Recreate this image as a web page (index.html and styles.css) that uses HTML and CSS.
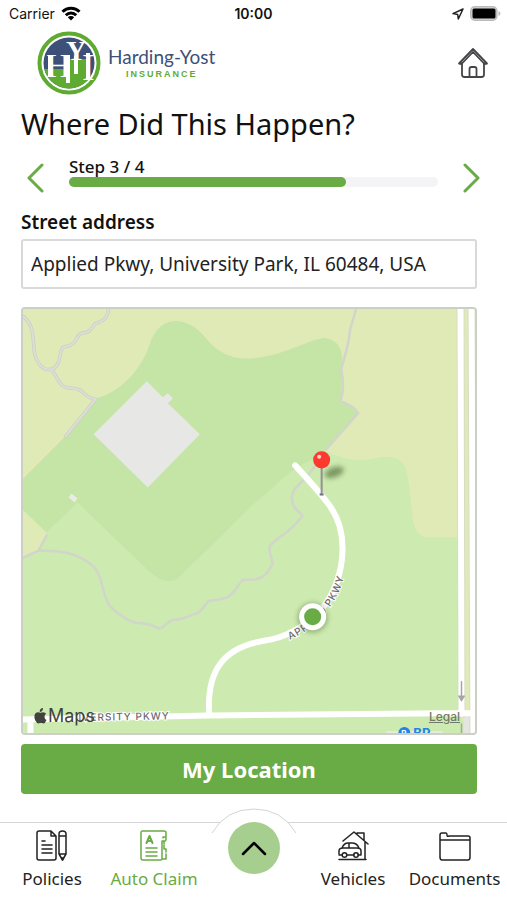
FILE: index.html
```html
<!DOCTYPE html>
<html lang="en">
<head>
<meta charset="utf-8">
<meta name="viewport" content="width=device-width, initial-scale=1">
<title>Harding-Yost Insurance</title>
<link rel="stylesheet" href="styles.css">
</head>
<body>
<div class="status">
  <div class="status-left">
    <span>Carrier</span>
    <svg width="20" height="15" viewBox="0 0 20 15" fill="none" stroke="#000" stroke-width="3"><path d="M1.5 5.8a12 12 0 0 1 17 0M4.8 9.2a7.4 7.4 0 0 1 10.4 0"/><path d="M10 14.5l-3.2-3.3a4.6 4.6 0 0 1 6.4 0z" fill="#000" stroke="none"/></svg>
  </div>
  <time class="clock">10:00</time>
  <div class="status-right">
    <svg width="12" height="12" viewBox="0 0 12 12" fill="none" stroke="#222" stroke-width="1.5" stroke-linejoin="round"><path d="M11 1L1 5.600l4.700.9.6 4.500z"/></svg>
    <svg width="31" height="15" viewBox="0 0 31 15"><rect x=".8" y=".8" width="26" height="13.400" rx="4" fill="#ddd" stroke="#bbb" stroke-width="1.600"/><rect x="2.500" y="2.500" width="23" height="10" rx="1.500"/><path d="M28.500 5q2 .8 2 2.500t-2 2.500z" fill="#bbb"/></svg>
  </div>
</div>

<header class="header">
  <div class="brand">
    <svg class="brand-mark" width="64" height="64" viewBox="0 0 64 64">
      <circle cx="32" cy="32" r="29.500" fill="#fff" stroke="#5fab32" stroke-width="4"/>
      <clipPath id="disc"><circle cx="32" cy="32" r="25.500"/></clipPath>
      <g clip-path="url(#disc)">
        <path fill="#3d5078" d="M0 0h64v64H0z"/>
        <path fill="#5fab32" d="M0 38h30V28h19v-6l4 2v36h-4v4H0z"/>
      </g>
      <path d="M13 24v22M31 24v28M39 25v18M51 22v26" stroke="#fff" stroke-width="4"/>
      <text class="monogram"><tspan class="mono-h" x="9" y="46">H</tspan><tspan class="mono-y" x="29" y="29">Y</tspan><tspan class="mono-i" x="45" y="49">I</tspan></text>
    </svg>
    <div class="brand-text"><span class="brand-name">Harding-Yost</span><span class="brand-sub">INSURANCE</span></div>
  </div>
  <a class="home" href="#" aria-label="Home">
    <svg width="32" height="32" viewBox="0 0 32 32" fill="none" stroke="#444548" stroke-width="1.800" stroke-linejoin="round" stroke-linecap="round"><path d="M2 16.500L16 2l14 14.500-2.500.5L16 5 4.500 17z"/><path d="M5 16v11.500q0 2.500 2.500 2.500h17q2.500 0 2.500-2.500V16M12.500 30v-8q0-2 2-2h3q2 0 2 2v8"/></svg>
  </a>
</header>

<main class="content">
  <h1>Where Did This Happen?</h1>
  <div class="steps">
    <button class="arrow" type="button" aria-label="Previous step"><svg width="18" height="30" viewBox="0 0 18 30"><path d="M16 2L3 15l13 13"/></svg></button>
    <div class="step">
      <span class="step-label">Step 3 / 4</span>
      <div class="track"><div class="fill"></div></div>
    </div>
    <button class="arrow" type="button" aria-label="Next step"><svg width="18" height="30" viewBox="0 0 18 30"><path d="M2 2l13 13L2 28"/></svg></button>
  </div>
  <label class="label" for="address">Street address</label>
  <input class="address" id="address" type="text" value="Applied Pkwy, University Park, IL 60484, USA">

  <div class="map">
    <svg class="map-art" viewBox="21 308 456 427" preserveAspectRatio="xMidYMid slice">
      <defs>
        <filter id="soft" x="-50%" y="-50%" width="200%" height="200%"><feGaussianBlur stdDeviation="2.500"/></filter>
        <path id="curve" d="M209 714V706C209 672 222 648 264 641C286 638 303 628 318 613C343 588 353 535 327 503Q318 491 295 466"/>
        <path id="label-line" d="M280 643C296 639 309 630 320 619C335 603 343 588 346 565"/>
      </defs>
      <path fill="#cdeab0" d="M0 290h500v460H0z"/>
      <path fill="#e0eab7" d="M0 290h500v248h-75Q414 534 412 518Q410 492 406 470Q400 455 380 458Q352 466 324 451L200 500H47V535L38 551L0 566z"/>
      <path fill="#c4e5a5" d="M0 503L66 437L97 399C119 394 142 371 150 345C160 314 188 317 205 338C224 362 245 363 276 355C302 347 312 340 325 339Q344 342 342 367L341 401Q357 408 357 414L330 446L318 458Q304 463 290 473L250 508L185 572Q170 591 150 572L78 503L47 533L0 488z"/>
      <path fill="#cdeab0" d="M78 503L47 533V551H110V534z"/>
      <path fill="#c4e5a5" d="M78 503L110 534L150 572V500z"/>
      <path fill="#e7e7e5" d="M147 382L165 400L163 398L168 394L173 399L168 404L200 435L148 488L94 435z"/>
      <path fill="#e9ebe5" d="M72 494l6 5-3 4-6-5z"/>
      <g fill="none" stroke-linejoin="round" stroke-linecap="round">
        <path stroke="#cbcec6" stroke-width="3.500" d="M20 315C36 323 33 341 35 354Q40 373 53 370C63 365 59 350 64 348C79 346 75 337 82 334C91 334 92 329 95 325C103 322 109 320 109 307M51 370C59 377 58 389 72 389C86 389 83 399 96 400L66 437"/>
        <path stroke="#dedeD6" stroke-width="2" d="M20 315C36 323 33 341 35 354Q40 373 53 370C63 365 59 350 64 348C79 346 75 337 82 334C91 334 92 329 95 325C103 322 109 320 109 307M51 370C59 377 58 389 72 389C86 389 83 399 96 400L66 437"/>
        <path stroke="#d2d5ca" stroke-width="2.500" d="M357 306L350 330Q349 340 346 352L341 370Q345 389 340 402C347 405 354 407 358 414L326 450M316 465Q310 474 300 484C289 493 290 504 297 511Q305 516 300 519C287 536 282 533 270 546C267 556 276 562 271 567C263 583 251 580 243 580C237 586 237 590 229 597C223 600 217 600 209 601C202 609 200 614 195 614C184 619 180 620 173 620C166 622 164 631 157 628C150 623 142 624 136 623C128 621 116 613 110 606C101 592 104 579 95 568C81 555 67 551 39 551L20 560M39 551L47 536"/>
        <path stroke="#e0eab7" stroke-width="16" d="M465 300L467 714"/>
        <path stroke="#e4e4e1" stroke-width="6" d="M466 719V750"/>
        <path stroke="#d7dcc4" stroke-width="8" d="M460 300L461 714M471 300L473 750"/>
        <path stroke="#fff" stroke-width="6" d="M460 300L461 714M471 300L473 750M0 720L209 715.500L472 713M31 721V750"/>
        <use href="#curve" stroke="#fff" stroke-width="6"/>
        <path stroke="#a5a5a8" stroke-width="1.500" d="M461 682V698M461 724V740"/>
        <path fill="#a5a5a8" stroke="#a5a5a8" stroke-width="1" d="M458 696h6l-3 5z"/>
      </g>
      <g class="road-label">
        <text x="79" y="721" transform="rotate(-1 79 721)">IVERSITY PKWY</text>
        <text><textPath href="#label-line" startOffset="10">APPLIED PKWY</textPath></text>
      </g>
      <path d="M386 734h56" stroke="#e6e8e2" stroke-width="6"/>
      <circle cx="404" cy="733" r="6" fill="#2184e8"/>
      <text class="poi-mark" x="401" y="736">P</text>
      <text class="poi" x="413" y="738">BP</text>
      <ellipse cx="334" cy="473" rx="10" ry="5" fill="#496231" opacity=".6" transform="rotate(-20 334 473)" filter="url(#soft)"/>
      <path d="M321.500 465v30" stroke="#929296" stroke-width="2"/><path d="M319.500 495h4" stroke="#6c7480" stroke-width="2"/>
      <circle cx="321.500" cy="460.500" r="8.500" fill="#fc3a30"/><circle cx="319" cy="457.500" r="2" fill="#ffd3ce"/>
      <circle cx="312.500" cy="618" r="15" fill="#557040" opacity=".45" filter="url(#soft)"/>
      <circle cx="312.500" cy="617" r="13.500" fill="#fff"/><circle cx="312.500" cy="617" r="8.500" fill="#69ab44"/>
    </svg>
    <span class="map-credit"><svg width="13" height="16" viewBox="0 0 13 16"><path d="M9 0q.1 2-1 3-1 1-2.300.9-.1-1.700.9-2.800Q7.600.2 9 0zM12.500 12q-1.500 3.500-3 3.500-.8 0-1.500-.4-1-.4-2.200 0-.7.4-1.400.4Q2.800 15.300 1.300 12.500 0 9.500.5 7.200 1.300 4.200 4 4.200q.8 0 1.500.4 1 .4 2 0 .8-.4 1.700-.4 1.900 0 3 1.600-1.800 1.100-1.700 3.100.1 2.200 2 3.100z"/></svg>Maps</span>
    <a class="map-legal" href="#">Legal</a>
  </div>
  <button class="primary" type="button">My Location</button>
</main>

<nav class="tabs">
  <a class="tab" href="#">
    <svg width="32" height="32" viewBox="0 0 32 32"><path d="M15 1H3Q1 1 1 3v25q0 2 2 2h15q2 0 2-2V6l-5-5v5h5M6 11h3M6 15h10M6 19h10M6 23h10M26.500 1q-3.500 0-3.500 3v20l3.500 6 3.500-6V4q0-3-3.500-3zM23 6h7M23 24h7"/><path d="M25.500 28h2l-1 2z"/></svg>
    <span>Policies</span>
  </a>
  <a class="tab active" href="#">
    <svg width="32" height="32" viewBox="0 0 32 32"><path d="M25 8V7h3V3q0-2-2-2H4Q3 1 3 3v25q0 2 2 2h18q1 0 1-2V11h2M28 7v3l-2 2v2M26 15v4h2v3M28 24v5h-3M8 18h11M8 22h11M8 26h11"/><path stroke-width="2" d="M8.500 13L11.500 6l3 7M9.500 11h4"/></svg>
    <span>Auto Claim</span>
  </a>
  <div class="tab-center">
    <svg class="arc" width="86" height="26" viewBox="0 0 86 26"><path d="M1 25Q15 1 43 1T85 25"/></svg>
    <button class="expand" type="button" aria-label="More"><svg width="26" height="16" viewBox="0 0 26 16"><path d="M2 14L13 3l11 11"/></svg></button>
  </div>
  <a class="tab" href="#">
    <svg width="32" height="32" viewBox="0 0 32 32"><path d="M6 11L17 2l14 12M20 4V3h7v7M28 12v17M2 29.500h27M2 24v-3q0-3 4-3h14q4 0 4 3v4h-3M5 18q2-5 6-5h4q5 0 7 5M12 13v5M2 25h3M10 25h7"/><circle cx="7.500" cy="25" r="2.300"/><circle cx="19" cy="25" r="2.300"/></svg>
    <span>Vehicles</span>
  </a>
  <a class="tab" href="#">
    <svg width="32" height="32" viewBox="0 0 32 32"><path d="M1 10V5q0-2 2-2h4q1 0 1 2t2 1h19q2 0 2 2v19q0 3-2 3H3q-2 0-2-3V10h30"/></svg>
    <span>Documents</span>
  </a>
</nav>
</body>
</html>
```
FILE: styles.css
```css
* { box-sizing: border-box; }

body {
  margin: 0;
  min-height: 100vh;
  display: flex;
  flex-direction: column;
  background: #fff;
  color: #111;
  font-family: "Noto Sans", "Open Sans", sans-serif;
}

button { font: inherit; border: 0; padding: 0; background: none; }
a { color: inherit; text-decoration: none; }
svg { display: block; }

.status {
  display: grid;
  grid-template-columns: 1fr auto 1fr;
  align-items: center;
  height: 27px;
  padding: 0 6px;
  font-family: Inter, sans-serif;
  font-size: 14px;
}
.status-left, .status-right { display: flex; align-items: center; gap: 6px; }
.status-left { padding-left: 3px; }
.status-right { justify-content: flex-end; }
.clock { font-weight: 600; }

.header {
  display: flex;
  justify-content: space-between;
  align-items: center;
  height: 71px;
  padding: 0 18px 0 37px;
}
.brand { display: flex; align-items: center; gap: 7px; }
.monogram { fill: #fff; font-family: "Liberation Serif", serif; }
.mono-h { font-size: 34px; }
.mono-y { font-size: 28px; font-weight: bold; }
.mono-i { font-size: 38px; }
.brand-text { display: flex; flex-direction: column; align-items: center; }
.brand-name { font: 19px/22px Lato, sans-serif; color: #3d5078; }
.brand-sub { font: bold 9px/12px "Liberation Sans", sans-serif; letter-spacing: 2px; color: #5fab32; }

.content {
  flex: 1;
  display: flex;
  flex-direction: column;
  padding: 8px 30px 28px 21px;
}
h1 { margin: 0; font-size: 29px; line-height: 36px; font-weight: 400; }

.steps { display: flex; align-items: center; gap: 25px; margin: 14px -4px 0 5px; }
.arrow svg { fill: none; stroke: #69ab44; stroke-width: 3; stroke-linecap: round; stroke-linejoin: round; }
.step { flex: 1; padding-bottom: 12px; }
.step-label { display: block; font-size: 17px; line-height: 21px; font-weight: 500; }
.track { height: 10px; border-radius: 5px; background: #f4f4f6; }
.fill { width: 75%; height: 10px; border-radius: 5px; background: #69ab44; }

.label { margin-top: 10px; font-size: 19px; line-height: 26px; font-weight: 600; }
.address {
  width: 100%;
  height: 50px;
  margin-top: 4px;
  padding: 0 8px;
  border: 2px solid #d9d9d9;
  border-radius: 3px;
  background: #fff;
  color: #222;
  font: 19px "Noto Sans", "Open Sans", sans-serif;
}

.map {
  position: relative;
  flex: 1;
  min-height: 240px;
  margin: 18px 0 9px;
  border: 2px solid #cccfc6;
  border-radius: 4px;
  overflow: hidden;
}
.map-art { position: absolute; inset: -2px; width: calc(100% + 4px); height: calc(100% + 4px); }
.road-label text {
  font: 500 10px Inter, sans-serif;
  letter-spacing: 1px;
  fill: #6b6870;
  stroke: #fff;
  stroke-width: 2px;
  paint-order: stroke;
}
.poi { font: bold 13px Inter, sans-serif; fill: #2184e8; }
.poi-mark { font: bold 8px Inter, sans-serif; fill: #fff; }
.map-credit {
  position: absolute;
  left: 11px;
  bottom: 5px;
  display: flex;
  align-items: center;
  gap: 1px;
  font: 18px/24px Inter, sans-serif;
  color: #40443c;
}
.map-credit svg { fill: #40443c; }
.map-legal {
  position: absolute;
  right: 15px;
  bottom: 9px;
  font: 500 12px/14px Inter, sans-serif;
  color: #70796a;
  text-decoration: underline;
}

.primary {
  height: 50px;
  border-radius: 4px;
  background: #69ab44;
  color: #fff;
  font-size: 22px;
  line-height: 30px;
  font-weight: 700;
}

.tabs {
  display: grid;
  grid-template-columns: 104fr 100fr 100fr 98fr 105fr;
  height: 78px;
  border-top: 1px solid #d4d4d4;
}
.tab { display: flex; flex-direction: column; align-items: center; gap: 5px; padding-top: 7px; color: #222; }
.tab svg { fill: none; stroke: currentColor; stroke-width: 1.500; stroke-linejoin: round; stroke-linecap: round; }
.tab span { font-size: 17px; line-height: 24px; white-space: nowrap; }
.tab.active { color: #69ab44; }

.tab-center { position: relative; display: flex; justify-content: center; }
.arc { position: absolute; top: -15px; fill: #fff; stroke: #d4d4d4; }
.expand {
  position: relative;
  display: grid;
  place-items: center;
  width: 52px;
  height: 52px;
  margin-top: -1px;
  border-radius: 50%;
  background: #a6cf8f;
}
.expand svg { fill: none; stroke: #000; stroke-width: 2.500; stroke-linecap: round; stroke-linejoin: round; }
```
